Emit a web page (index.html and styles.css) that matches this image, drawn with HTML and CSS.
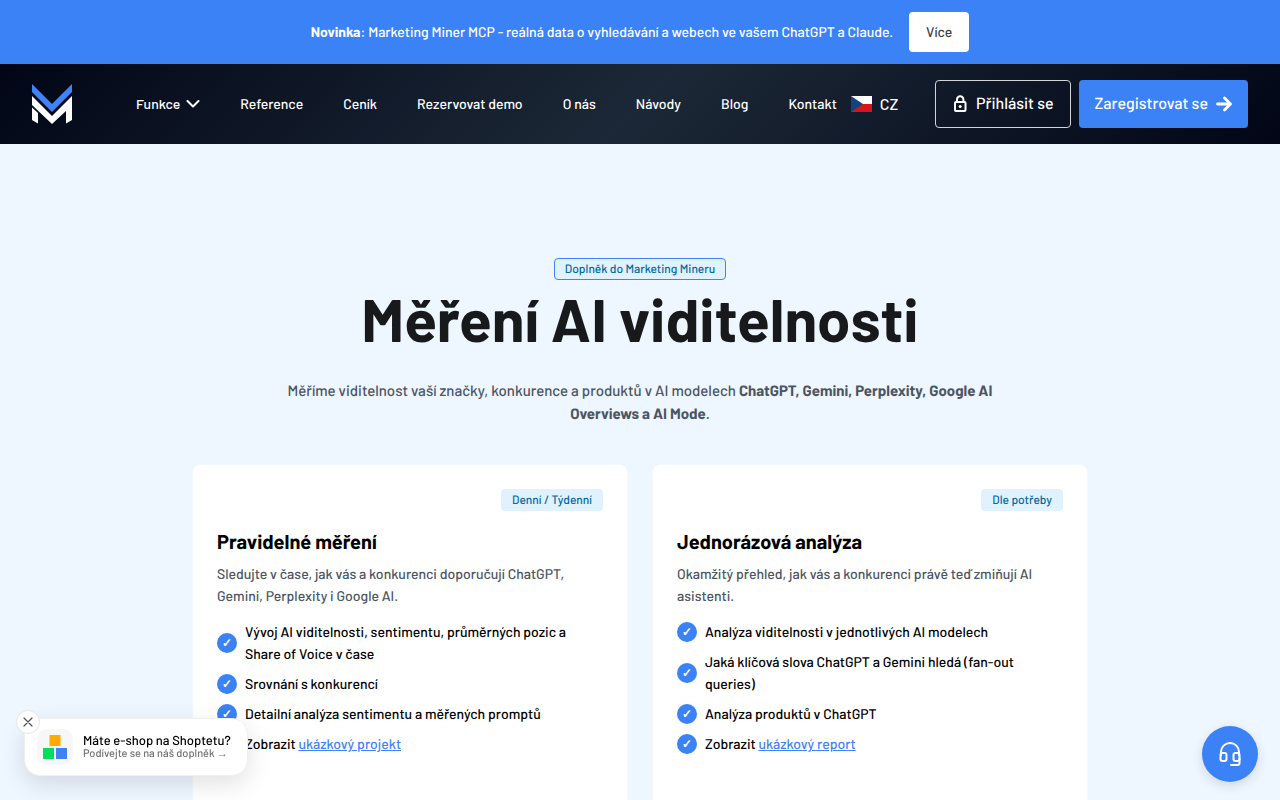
FILE: index.html
```html
<!DOCTYPE html>
<html lang="cs">
<head>
<meta charset="utf-8">
<meta name="viewport" content="width=device-width, initial-scale=1">
<title>Měření AI viditelnosti</title>
<link rel="stylesheet" href="styles.css">
</head>
<body>
<aside class="promo">
  <p><strong>Novinka</strong>: Marketing Miner MCP - reálná data o vyhledávání a webech ve vašem ChatGPT a Claude.</p>
  <a class="promo-link" href="#mcp">Více</a>
</aside>
<header class="header">
  <a class="logo" href="#home" aria-label="Marketing Miner">
    <svg width="40" height="40" viewBox="0 0 40 40" aria-hidden="true">
      <path fill="#3f83f8" d="M0 0 20 20 40 0V8L20 28 0 8Z"/>
      <path fill="#fff" d="M0 12 20 32 40 12V36L34 39.500V27L20 40 0 21Z"/>
      <path fill="#fff" d="M0 23.500 6 29V39.500L0 36Z"/>
    </svg>
  </a>
  <nav class="nav">
    <button class="nav-item" type="button">Funkce
      <svg width="14" height="8" viewBox="0 0 14 8" fill="none" stroke="currentColor" stroke-width="2" stroke-linecap="round" stroke-linejoin="round" aria-hidden="true"><path d="M1.500 1 7 6.500 12.500 1"/></svg>
    </button>
    <a class="nav-item" href="#reference">Reference</a>
    <a class="nav-item" href="#cenik">Ceník</a>
    <a class="nav-item" href="#demo">Rezervovat demo</a>
    <a class="nav-item" href="#o-nas">O nás</a>
    <a class="nav-item" href="#navody">Návody</a>
    <a class="nav-item" href="#blog">Blog</a>
    <a class="nav-item" href="#kontakt">Kontakt</a>
  </nav>
  <button class="language" type="button">
    <svg width="21" height="16" viewBox="0 0 21 16" aria-hidden="true"><path fill="#fff" d="M0 0h21v8H0z"/><path fill="#d7141a" d="M0 8h21v8H0z"/><path fill="#11457e" d="m0 0 12 8-12 8z"/></svg>
    CZ
  </button>
  <div class="account">
    <a class="button button-outline" href="#login">
      <svg width="16" height="18" viewBox="0 0 16 18" fill="none" stroke="currentColor" stroke-width="2" aria-hidden="true"><rect x="3" y="7" width="10.500" height="9" rx="1"/><path d="M5 7V4.500a3.200 3.200 0 0 1 6.400 0V7"/><circle cx="8.200" cy="11.500" r="1.500" fill="currentColor" stroke="none"/></svg>
      Přihlásit se
    </a>
    <a class="button button-primary" href="#register">
      Zaregistrovat se
      <svg width="16" height="16" viewBox="0 0 16 16" fill="none" stroke="currentColor" stroke-width="2.800" stroke-linecap="round" stroke-linejoin="round" aria-hidden="true"><path d="M1.500 8H14M8.500 2l6 6-6 6"/></svg>
    </a>
  </div>
</header>
<main class="main">
  <section class="hero">
    <span class="tag tag-bordered">Doplněk do Marketing Mineru</span>
    <h1>Měření AI viditelnosti</h1>
    <p>Měříme viditelnost vaší značky, konkurence a produktů v AI modelech <strong>ChatGPT, Gemini, Perplexity, Google AI Overviews a AI Mode</strong>.</p>
  </section>
  <section class="cards">
    <article class="card">
      <span class="tag">Denní / Týdenní</span>
      <h2>Pravidelné měření</h2>
      <p>Sledujte v čase, jak vás a konkurenci doporučují ChatGPT, Gemini, Perplexity i Google AI.</p>
      <ul class="features">
        <li>Vývoj AI viditelnosti, sentimentu, průměrných pozic a Share of Voice v čase</li>
        <li>Srovnání s konkurencí</li>
        <li>Detailní analýza sentimentu a měřených promptů</li>
        <li><span>Zobrazit <a href="#projekt">ukázkový projekt</a></span></li>
      </ul>
    </article>
    <article class="card">
      <span class="tag">Dle potřeby</span>
      <h2>Jednorázová analýza</h2>
      <p>Okamžitý přehled, jak vás a konkurenci právě teď zmiňují AI asistenti.</p>
      <ul class="features">
        <li>Analýza viditelnosti v jednotlivých AI modelech</li>
        <li>Jaká klíčová slova ChatGPT a Gemini hledá (fan-out queries)</li>
        <li>Analýza produktů v ChatGPT</li>
        <li><span>Zobrazit <a href="#report">ukázkový report</a></span></li>
      </ul>
    </article>
  </section>
</main>
<aside class="shop">
  <button class="shop-close" type="button" aria-label="Zavřít">
    <svg width="10" height="10" viewBox="0 0 10 10" stroke="currentColor" stroke-width="1.200" stroke-linecap="round" aria-hidden="true"><path d="m1 1 8 8M9 1 1 9"/></svg>
  </button>
  <a class="shop-card" href="#shoptet">
    <span class="shop-icon">
      <svg width="24" height="24" viewBox="0 0 24 24" aria-hidden="true"><path fill="#ffab00" d="M6.500 0h11v11h-11z"/><path fill="#00df5c" d="M0 13h11v11H0z"/><path fill="#3f83f8" d="M13 13h11v11H13z"/></svg>
    </span>
    <span class="shop-text">
      <span class="shop-title">Máte e-shop na Shoptetu?</span>
      <span class="shop-note">Podívejte se na náš doplněk →</span>
    </span>
  </a>
</aside>
<button class="support" type="button" aria-label="Podpora">
  <svg width="24" height="26" viewBox="0 0 24 26" fill="none" stroke="currentColor" stroke-width="2" stroke-linecap="round" stroke-linejoin="round" aria-hidden="true"><path d="M3 14.500V11a9 9 0 0 1 18 0v3.500"/><rect x="2.500" y="12" width="6" height="8" rx="2"/><rect x="15.500" y="12" width="6" height="8" rx="2"/><path d="M21.500 17.500V22a2 2 0 0 1-2 2h-6.500"/></svg>
</button>
</body>
</html>
```

FILE: styles.css
```css
* { box-sizing: border-box; }

body {
  margin: 0;
  background: #eef6ff;
  color: #000;
  font-family: Barlow, Roboto, sans-serif;
  font-size: 14px;
  line-height: 22px;
  text-rendering: geometricPrecision;
}

h1, h2, p, ul { margin: 0; padding: 0; }
a { color: inherit; text-decoration: none; }
button { padding: 0; border: 0; background: none; color: inherit; font: inherit; cursor: pointer; }
svg { flex: none; display: block; }

.promo {
  display: flex;
  align-items: center;
  justify-content: center;
  gap: 16px;
  min-height: 64px;
  padding: 12px 32px;
  background: #3b82f6;
  color: #fff;
  font-weight: 500;
}

.promo-link {
  padding: 9px 17px;
  border-radius: 4px;
  background: #fff;
  color: #404040;
}

.header {
  display: flex;
  align-items: center;
  min-height: 80px;
  padding: 16px 32px;
  background: linear-gradient(135deg, #020617, #1c2837 50%, #020617);
  color: #fff;
}

.nav { display: flex; gap: 40px; margin-left: 64px; }

.nav-item {
  display: flex;
  align-items: center;
  gap: 6px;
  font-weight: 500;
  white-space: nowrap;
}

.language {
  display: flex;
  align-items: center;
  gap: 8px;
  margin-left: 14px;
  font-size: 16px;
  font-weight: 500;
}

.account { display: flex; gap: 8px; margin-left: auto; }

.button {
  display: flex;
  align-items: center;
  justify-content: center;
  gap: 8px;
  height: 48px;
  padding: 0 15px;
  border: 1px solid transparent;
  border-radius: 4px;
  font-size: 16px;
  font-weight: 500;
  white-space: nowrap;
}

.button-outline { padding: 0 16px; border-color: #d1d5db; }
.button-primary { background: #3b82f6; }

.main { max-width: 960px; margin: 0 auto; padding: 114px 32px 64px; }

.hero {
  display: flex;
  flex-direction: column;
  align-items: center;
  text-align: center;
}

.tag {
  padding: 1px 11px;
  border-radius: 4px;
  background: #e0f2fe;
  color: #0369a1;
  font-size: 12px;
  font-weight: 500;
  line-height: 20px;
}

.tag-bordered { padding: 0 10px; border: 1px solid #3f83f8; }

h1 {
  margin-top: 8px;
  color: #18191b;
  font-size: 60px;
  font-weight: 700;
  line-height: 60px;
}

.hero p {
  max-width: 720px;
  margin-top: 31px;
  color: #4b5563;
  font-size: 15px;
  font-weight: 500;
  line-height: 23px;
}

.cards {
  display: grid;
  grid-template-columns: 1fr 1fr;
  gap: 24px;
  margin-top: 39px;
}

.card {
  display: flex;
  flex-direction: column;
  min-height: 360px;
  padding: 24px;
  border: 1px solid #f3f8fe;
  border-radius: 8px;
  background: #fff;
}

.card .tag { align-self: flex-end; }

h2 { margin-top: 16px; font-size: 20px; font-weight: 700; line-height: 28px; }

.card p { margin-top: 8px; color: #4b5563; font-weight: 500; }

.features { display: grid; gap: 8px; margin-top: 14px; list-style: none; font-weight: 500; }

.features li { display: flex; align-items: center; gap: 8px; }

.features li::before {
  content: "✓";
  flex: none;
  width: 20px;
  height: 20px;
  border-radius: 50%;
  background: #3b82f6;
  color: #fff;
  font-size: 12px;
  font-weight: 700;
  line-height: 20px;
  text-align: center;
}

.features a { color: #3f83f8; text-decoration: underline; }

.shop { position: fixed; left: 24px; bottom: 24px; }

.shop-card {
  display: flex;
  align-items: center;
  gap: 10px;
  padding: 10px 16px 10px 12px;
  border: 1px solid #f0f0f0;
  border-radius: 16px;
  background: #fff;
  box-shadow: 0 8px 24px #0000001f;
}

.shop-icon {
  display: grid;
  place-items: center;
  width: 36px;
  height: 36px;
  border-radius: 10px;
  background: #f7f7f7;
}

.shop-text { display: grid; line-height: 14px; }
.shop-title { font-size: 13px; font-weight: 500; }
.shop-note { color: #737373; font-size: 11px; font-weight: 500; }

.shop-close {
  position: absolute;
  top: -8px;
  left: -8px;
  display: grid;
  place-items: center;
  width: 24px;
  height: 24px;
  border: 1px solid #e5e5e5;
  border-radius: 50%;
  background: #fff;
  color: #525252;
}

.support {
  position: fixed;
  right: 22px;
  bottom: 18px;
  display: grid;
  place-items: center;
  width: 56px;
  height: 56px;
  border-radius: 50%;
  background: #3b82f6;
  color: #fff;
  box-shadow: 0 4px 12px #0000001f;
}
```
